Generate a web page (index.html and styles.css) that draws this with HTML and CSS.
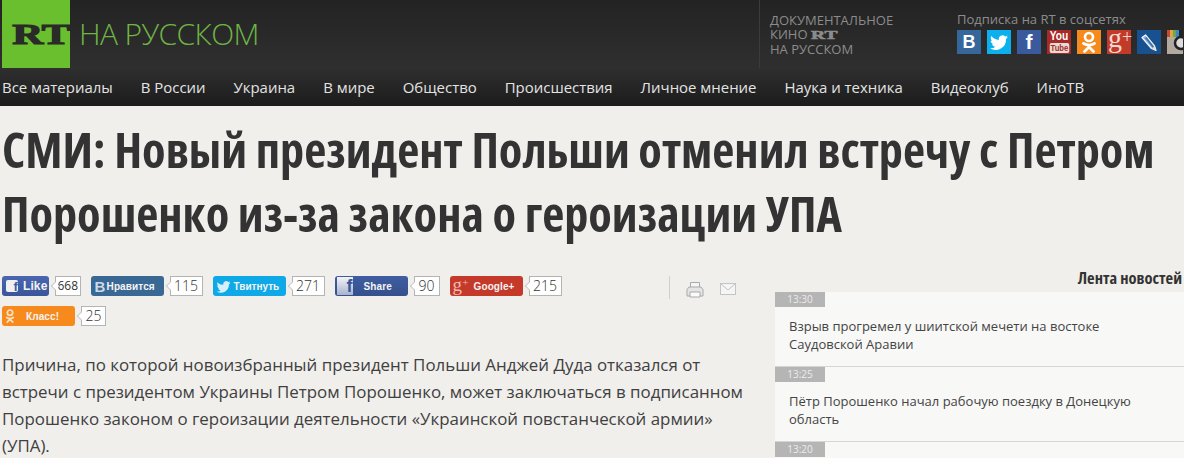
FILE: index.html
```html
<!DOCTYPE html>
<html lang="ru">
<head>
    <meta charset="UTF-8">
    <title>СМИ: Новый президент Польши отменил встречу с Петром Порошенко</title>
    <link rel="stylesheet" href="styles.css">
</head>
<body>
    <header class="top-bar">
        <div class="logo-box"><span class="logo-rt">RT</span></div>
        <div class="logo-name">НА РУССКОМ</div>
        <div class="doc-link">
            <div>ДОКУМЕНТАЛЬНОЕ</div>
            <div>КИНО <span class="doc-rt">RT</span></div>
            <div>НА РУССКОМ</div>
        </div>
        <div class="subscribe">
            <div class="subscribe-title">Подписка на RT в соцсетях</div>
            <div class="social-icons">
                <span class="social vk">В</span>
                <span class="social tw">
                    <svg viewBox="0 0 24 24" width="24" height="24"><path fill="#fff" d="M21 7c-.7.3-1.400.5-2.100.6.800-.5 1.300-1.200 1.600-2-.7.400-1.500.7-2.300.9a3.700 3.700 0 0 0-6.300 3.400C8.800 9.700 6.100 8.200 4.300 6c-1 1.700-.5 3.800 1.100 4.900-.6 0-1.200-.2-1.700-.5 0 1.800 1.300 3.300 3 3.700-.5.100-1.100.2-1.700.1.500 1.500 1.800 2.500 3.400 2.500A7.400 7.400 0 0 1 3 18.300 10.400 10.400 0 0 0 19 9c.8-.6 1.500-1.200 2-2z"/></svg>
                </span>
                <span class="social fb">f</span>
                <span class="social yt"><span class="yt-you">You</span><span class="yt-tube">Tube</span></span>
                <span class="social ok">
                    <svg viewBox="0 0 24 24" width="24" height="24"><circle cx="12" cy="7" r="4" fill="none" stroke="#fff" stroke-width="2.600"/><path d="M6.500 13.500c3.500 2 7.500 2 11 0M12 15.500v1.500M7.500 21.500L12 17l4.500 4.500" fill="none" stroke="#fff" stroke-width="2.800" stroke-linecap="round"/></svg>
                </span>
                <span class="social gp"><span class="gp-g">g</span><span class="gp-plus">+</span></span>
                <span class="social lj">
                    <svg viewBox="0 0 24 24" width="24" height="24"><path d="M5 7.500L8.500 5l9 11 1.500 4.500-4.500-2z" fill="#8fb0d4" stroke="#eef3f8" stroke-width="1.300" stroke-linejoin="round"/><path d="M8 8l1.500-1 7.500 9.500-1.500 1z" fill="#3f74ac"/><path d="M15.500 18.500l3.500 2-1.500-4.500z" fill="#f0d9b5"/></svg>
                </span>
                <span class="social ig">
                    <svg viewBox="0 0 16 24" width="16" height="24"><rect width="16" height="24" fill="#b3aa9f"/><rect width="3" height="7" fill="#c9463a"/><rect x="3" width="3" height="7" fill="#e0a63a"/><rect x="6" width="3" height="7" fill="#6aa84f"/><rect x="9" width="3" height="7" fill="#3d85c6"/><rect x="12" width="4" height="7" fill="#222"/><circle cx="14" cy="13" r="6" fill="#ddd" stroke="#222" stroke-width="2.500"/></svg>
                </span>
            </div>
        </div>
    </header>

    <nav class="main-nav">
        <a>Все материалы</a>
        <a>В России</a>
        <a>Украина</a>
        <a>В мире</a>
        <a>Общество</a>
        <a>Происшествия</a>
        <a>Личное мнение</a>
        <a>Наука и техника</a>
        <a>Видеоклуб</a>
        <a>ИноТВ</a>
    </nav>

    <h1 class="headline">СМИ: Новый президент Польши отменил встречу с Петром Порошенко из-за закона о героизации УПА</h1>

    <div class="columns">
        <main class="article">
            <div class="share-row">
                <div class="share-buttons">
                    <div class="share"><span class="btn btn-fb-like"><i class="fb-mark">f</i>Like</span><span class="count count-small">668</span></div>
                    <div class="share"><span class="btn btn-vk"><i class="vk-mark">В</i>Нравится</span><span class="count">115</span></div>
                    <div class="share"><span class="btn btn-tw"><svg class="tw-mark" viewBox="0 0 24 24" width="15" height="15"><path fill="#d5effb" d="M23 5.500c-.8.400-1.700.600-2.600.700.900-.600 1.600-1.400 2-2.500-.9.500-1.800.900-2.900 1.100a4.500 4.500 0 0 0-7.700 4.100C8 9.700 4.700 7.900 2.500 5.100c-1.200 2-.6 4.600 1.400 6-.7 0-1.400-.2-2-.6 0 2.200 1.500 4.100 3.600 4.500-.7.200-1.300.2-2 .1.600 1.800 2.200 3.100 4.200 3.100A9 9 0 0 1 1 20a12.800 12.800 0 0 0 19.700-11.300c.9-.7 1.700-1.500 2.300-3.200z"/></svg>Твитнуть</span><span class="count">271</span></div>
                    <div class="share"><span class="btn btn-fb-share"><i class="fb-big">f</i>Share</span><span class="count count-wide">90</span></div>
                    <div class="share"><span class="btn btn-gp"><i class="gp-mark">g<sup>+</sup></i>Google+</span><span class="count">215</span></div>
                    <div class="share"><span class="btn btn-ok"><svg class="ok-mark" viewBox="0 0 24 24" width="16" height="20"><circle cx="12" cy="7" r="4" fill="none" stroke="#f8dfc0" stroke-width="2.600"/><path d="M6 14c4 2.500 8 2.500 12 0M12 16v1M7 22l5-5 5 5" fill="none" stroke="#f8dfc0" stroke-width="2.600"/></svg>Класс!</span><span class="count">25</span></div>
                </div>
                <div class="tools">
                    <svg viewBox="0 0 18 17" width="18" height="17"><path d="M4.500 6V1.500h9V6" fill="#f4f4f4" stroke="#a9a9a9"/><path d="M1 15V8.500L3 6h12l2 2.500V15z" fill="#e4e4e4" stroke="#a9a9a9"/><path d="M4 11h10v5H4z" fill="#fbfbfb" stroke="#a9a9a9"/></svg>
                    <svg viewBox="0 0 16 12" width="16" height="12"><rect x=".5" y=".5" width="15" height="11" fill="#f5f5f5" stroke="#c4c4c4"/><path d="M1 1l7 6 7-6" fill="none" stroke="#c4c4c4"/></svg>
                </div>
            </div>
            <p class="lead">Причина, по которой новоизбранный президент Польши Анджей Дуда отказался от встречи с президентом Украины Петром Порошенко, может заключаться в подписанном Порошенко законом о героизации деятельности «Украинской повстанческой армии» (УПА).</p>
        </main>

        <aside class="news-feed">
            <h2 class="feed-title">Лента новостей</h2>
            <div class="feed-item">
                <div class="feed-time">13:30</div>
                <p class="feed-text">Взрыв прогремел у шиитской мечети на востоке Саудовской Аравии</p>
            </div>
            <div class="feed-item">
                <div class="feed-time">13:25</div>
                <p class="feed-text">Пётр Порошенко начал рабочую поездку в Донецкую область</p>
            </div>
            <div class="feed-item feed-item-last">
                <div class="feed-time">13:20</div>
            </div>
        </aside>
    </div>
</body>
</html>
```

FILE: styles.css
```css
html, body {
    height: 458px;
    overflow: hidden;
}
body {
    margin: 0;
    background-color: #f0efec;
    font-family: "Open Sans", sans-serif;
    color: #333;
}

/* header */
.top-bar {
    display: flex;
    height: 68px;
    background: linear-gradient(#232323, #2f2f2f);
}
.logo-box {
    width: 68px;
    height: 68px;
    margin-left: 2px;
    background-color: #6abf2e;
    overflow: hidden;
    display: flex;
    justify-content: flex-end;
}
.logo-rt {
    font-family: "Liberation Serif", serif;
    font-weight: bold;
    font-size: 29px;
    line-height: 68px;
    color: #2a2a28;
    transform: scaleX(1.48);
    transform-origin: right center;
    -webkit-text-stroke: 1.2px #2a2a28;
}
.logo-name {
    width: 680px;
    margin-left: 9px;
    font-size: 30px;
    font-weight: 300;
    line-height: 68px;
    letter-spacing: -0.6px;
    color: #70b544;
    white-space: nowrap;
}
.doc-link {
    width: 187px;
    padding: 13px 0 0 10px;
    border-left: 1px solid #3b3b3b;
    font-size: 13px;
    line-height: 14px;
    color: #8c8c8c;
}
.doc-rt {
    display: inline-block;
    font-family: "Liberation Serif", serif;
    font-weight: bold;
    transform: scaleX(1.5);
    transform-origin: left center;
    -webkit-text-stroke: 0.6px #8c8c8c;
}
.subscribe {
    flex: 1;
    min-width: 0;
    padding-top: 12px;
}
.subscribe-title {
    font-size: 13px;
    line-height: 15px;
    color: #8c8c8c;
    white-space: nowrap;
}
.social-icons {
    display: flex;
    gap: 6px;
    margin-top: 3px;
}
.social {
    flex: none;
    width: 24px;
    height: 24px;
    display: flex;
    align-items: center;
    justify-content: center;
    color: #fff;
    font-weight: bold;
}
.vk { background-color: #36679a; font-size: 18px; font-family: "Liberation Sans", sans-serif; }
.tw { background-color: #0cb0ec; }
.fb { background-color: #3b5a9e; font-size: 21px; font-family: "Liberation Sans", sans-serif; }
.yt {
    background-color: #a82a26;
    flex-direction: column;
    font-family: "Liberation Sans", sans-serif;
}
.yt-you { font-size: 12px; line-height: 11px; transform: scaleX(0.85); }
.yt-tube {
    margin-top: 1px;
    padding: 0 1px;
    font-size: 9px;
    line-height: 10px;
    background-color: #e5dcd8;
    color: #a82a26;
    border-radius: 2px;
    transform: scaleX(0.85);
}
.ok { background-color: #f78a1c; }
.gp {
    background-color: #c23a28;
    font-family: "Liberation Serif", serif;
    font-weight: normal;
    color: #f6d8d2;
    align-items: flex-start;
    justify-content: flex-start;
}
.gp-g { margin: -4px 0 0 1px; font-size: 28px; line-height: 24px; }
.gp-plus { font-size: 18px; line-height: 15px; }
.lj { background-color: #17518f; }
.ig { width: 16px; }

/* nav */
.main-nav {
    display: flex;
    gap: 28px;
    height: 38px;
    padding-left: 2px;
    background: linear-gradient(#2f2f2f, #1c1c1c);
}
.main-nav a {
    font-size: 14.950px;
    line-height: 39px;
    color: #e3e3e3;
    white-space: nowrap;
}

/* title */
.headline {
    margin: 11px 0 0 2px;
    font-family: "Open Sans", sans-serif;
    font-stretch: condensed;
    font-size: 48.250px;
    line-height: 64px;
    font-weight: bold;
    color: #333;
    width: 1180px;
}

.columns {
    display: flex;
    height: 193px;
    margin-top: 20px;
    overflow: hidden;
}
.article {
    width: 772px;
    padding: 11px 0 0 2px;
    box-sizing: border-box;
}
.share-row {
    display: flex;
    width: 740px;
    height: 54px;
}
.share-buttons {
    width: 667px;
    display: flex;
    flex-wrap: wrap;
    gap: 10px 0;
    align-content: flex-start;
}
.share {
    display: flex;
    margin-right: 10px;
}
.btn {
    width: 73px;
    height: 20px;
    border-radius: 3px;
    display: flex;
    align-items: center;
    box-sizing: border-box;
    color: #f4f4f4;
    font-family: "Liberation Sans", sans-serif;
    font-size: 10px;
    font-weight: bold;
    letter-spacing: 0.1px;
    white-space: nowrap;
}
.btn i { font-style: normal; }
.btn-fb-like { width: 47px; background: linear-gradient(#4a66b0, #3a5599); font-size: 12px; }
.fb-mark {
    width: 12px;
    height: 12px;
    margin: 0 5px 0 4px;
    background-color: #f0f0f0;
    color: #3f5ca6;
    border-radius: 2px;
    font-size: 13px;
    text-align: right;
    line-height: 13px;
}
.btn-vk { background-color: #3a6895; }
.vk-mark {
    width: 11px;
    margin-right: 1px;
    padding-left: 4px;
    font-size: 15px;
    color: #cbd8e6;
}
.btn-tw { background-color: #0ea9e6; letter-spacing: 0; }
.tw-mark { margin: 0 3px; flex: none; }
.btn-fb-share { background: linear-gradient(#3f5da0, #34508d); }
.fb-big {
    width: 16px;
    height: 18px;
    margin: 0 11px 0 2px;
    flex: none;
    background: linear-gradient(#f2f3f7, #a6b3cf);
    color: #3a5795;
    font-size: 18px;
    text-align: right;
    line-height: 19px;
}
.btn-gp { background-color: #c4392a; }
.gp-mark {
    width: 18px;
    margin: -2px 3px 0 3px;
    flex: none;
    font-family: "Liberation Serif", serif;
    font-weight: normal;
    font-size: 19px;
    color: #f2bcb2;
    line-height: 16px;
}
.gp-mark sup { font-size: 11px; line-height: 0; vertical-align: 5px; }
.btn-ok { background-color: #f78a1c; }
.ok-mark { margin: 0 8px 0 0; flex: none; }
.count {
    position: relative;
    height: 20px;
    margin-left: 6px;
    padding: 0 3.500px;
    border: 1px solid #b4b4b4;
    box-sizing: border-box;
    background-color: #fff;
    font-size: 14px;
    font-weight: 300;
    line-height: 18px;
    color: #333;
}
.count::before {
    content: "";
    position: absolute;
    left: -4px;
    top: 6px;
    width: 5px;
    height: 5px;
    background-color: #fff;
    border-left: 1px solid #c8c8c8;
    border-bottom: 1px solid #c8c8c8;
    transform: rotate(45deg);
}
.count-small { padding: 0 1.500px; font-size: 12px; font-weight: 400; }
.count-wide { padding: 0 4px; }
.tools {
    display: flex;
    gap: 16px;
    align-items: center;
    height: 20px;
    padding: 3px 0 0 16px;
    border-left: 1px solid #cfcfcf;
}
.lead {
    margin: 21px 0 0;
    width: 745px;
    font-size: 16.900px;
    line-height: 27px;
    color: #404040;
}

/* news feed */
.news-feed {
    flex: 1;
    min-width: 0;
    margin-left: 3px;
}
.feed-title {
    margin: 0;
    padding: 1px 2px 2px 0;
    text-align: right;
    font-stretch: condensed;
    font-size: 16.500px;
    line-height: 24px;
    color: #333;
}
.feed-item {
    box-sizing: border-box;
    height: 75px;
    background-color: #f8f8f7;
    border-bottom: 1px solid #d5d5d5;
}
.feed-item-last { height: 16px; border-bottom: none; }
.feed-time {
    width: 50px;
    height: 15px;
    background-color: #b5b5b5;
    color: #ececec;
    font-size: 10px;
    line-height: 15px;
    text-align: center;
}
.feed-text {
    margin: 0;
    padding: 10px 40px 0 14px;
    font-size: 13px;
    line-height: 18px;
    color: #444;
}
```
